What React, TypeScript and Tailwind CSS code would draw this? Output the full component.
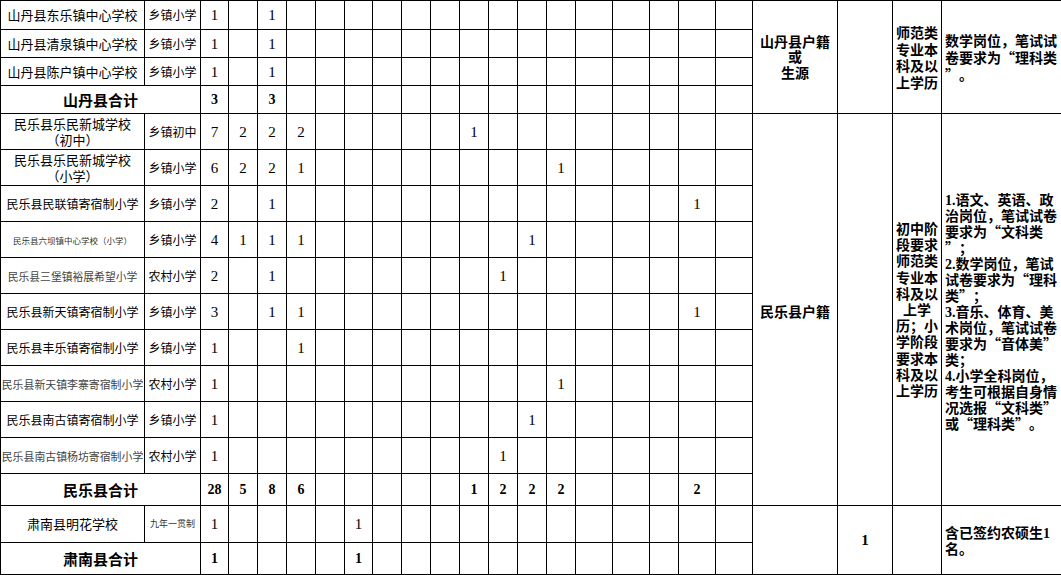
import React from "react";

const CJK = "font-['Noto_Sans_CJK_SC',sans-serif]";
const SERIF = "font-['Liberation_Serif','Noto_Sans_CJK_SC',serif]";
const TD = "border border-black p-0 text-center align-middle";

type Row = {
  h: string;
  name?: React.ReactNode;
  nameCls?: string;
  type?: string;
  typeCls?: string;
  total?: string;
  vals: Record<number, number>;
};

const rows: Row[] = [
  { h: "h-[29px]", name: "山丹县东乐镇中心学校", nameCls: "text-[13px]", type: "乡镇小学", vals: { 2: 1, 4: 1 } },
  { h: "h-[28px]", name: "山丹县清泉镇中心学校", nameCls: "text-[13px]", type: "乡镇小学", vals: { 2: 1, 4: 1 } },
  { h: "h-[28px]", name: "山丹县陈户镇中心学校", nameCls: "text-[13px]", type: "乡镇小学", vals: { 2: 1, 4: 1 } },
  { h: "h-[28px]", total: "山丹县合计", vals: { 2: 3, 4: 3 } },
  {
    h: "h-[36px]",
    name: (
      <>
        民乐县乐民新城学校
        <br />
        （初中）
      </>
    ),
    nameCls: "text-[13px] leading-[15px]",
    type: "乡镇初中",
    vals: { 2: 7, 3: 2, 4: 2, 5: 2, 11: 1 },
  },
  {
    h: "h-[36px]",
    name: (
      <>
        民乐县乐民新城学校
        <br />
        （小学）
      </>
    ),
    nameCls: "text-[13px] leading-[15px]",
    type: "乡镇小学",
    vals: { 2: 6, 3: 2, 4: 2, 5: 1, 14: 1 },
  },
  { h: "h-[36px]", name: "民乐县民联镇寄宿制小学", nameCls: "text-[12px]", type: "乡镇小学", vals: { 2: 2, 4: 1, 18: 1 } },
  { h: "h-[36px]", name: "民乐县六坝镇中心学校（小学）", nameCls: "text-[8.5px] text-[#333]", type: "乡镇小学", vals: { 2: 4, 3: 1, 4: 1, 5: 1, 13: 1 } },
  { h: "h-[36px]", name: "民乐县三堡镇裕展希望小学", nameCls: "text-[10.8px] text-[#444]", type: "农村小学", vals: { 2: 2, 4: 1, 12: 1 } },
  { h: "h-[36px]", name: "民乐县新天镇寄宿制小学", nameCls: "text-[12px]", type: "乡镇小学", vals: { 2: 3, 4: 1, 5: 1, 18: 1 } },
  { h: "h-[36px]", name: "民乐县丰乐镇寄宿制小学", nameCls: "text-[12px]", type: "乡镇小学", vals: { 2: 1, 5: 1 } },
  { h: "h-[36px]", name: "民乐县新天镇李寨寄宿制小学", nameCls: "text-[10.9px] text-[#444]", type: "农村小学", vals: { 2: 1, 14: 1 } },
  { h: "h-[36px]", name: "民乐县南古镇寄宿制小学", nameCls: "text-[12px]", type: "乡镇小学", vals: { 2: 1, 13: 1 } },
  { h: "h-[36px]", name: "民乐县南古镇杨坊寄宿制小学", nameCls: "text-[10.9px] text-[#444]", type: "农村小学", vals: { 2: 1, 12: 1 } },
  { h: "h-[32px]", total: "民乐县合计", vals: { 2: 28, 3: 5, 4: 8, 5: 6, 11: 1, 12: 2, 13: 2, 14: 2, 18: 2 } },
  { h: "h-[37px]", name: "肃南县明花学校", nameCls: "text-[13px]", type: "九年一贯制", typeCls: "text-[9px] text-[#333]", vals: { 2: 1, 7: 1 } },
  { h: "h-[32px]", total: "肃南县合计", vals: { 2: 1, 7: 1 } },
];

const NUM_W = [
  "w-[28px]", "w-[29px]", "w-[29px]", "w-[29px]", "w-[29px]", "w-[28px]", "w-[29px]",
  "w-[29px]", "w-[29px]", "w-[29px]", "w-[29px]", "w-[29px]", "w-[29px]",
  "w-[37px]", "w-[37px]", "w-[29px]", "w-[37px]", "w-[37px]",
];

// Renders a string with full-width quotation marks and serif digits.
function fmt(s: string): React.ReactNode[] {
  const out: React.ReactNode[] = [];
  const re = /([“”]|[0-9]+\.?)/g;
  let last = 0;
  let m: RegExpExecArray | null;
  let k = 0;
  while ((m = re.exec(s))) {
    if (m.index > last) out.push(s.slice(last, m.index));
    const t = m[0];
    if (t === "“") {
      out.push(
        <span key={k++} className="inline-block w-[14px] text-right">
          “
        </span>
      );
    } else if (t === "”") {
      out.push(
        <span key={k++} className="inline-block w-[14px] text-left">
          ”
        </span>
      );
    } else {
      out.push(
        <span key={k++} className={`${SERIF} font-bold`}>
          {t}
        </span>
      );
    }
    last = m.index + t.length;
  }
  if (last < s.length) out.push(s.slice(last));
  return out;
}

const Lines = ({ lines, h }: { lines: string[]; h: string }) => (
  <>
    {lines.map((l, i) => (
      <div key={i} className={`whitespace-nowrap overflow-visible ${h}`}>
        {fmt(l)}
      </div>
    ))}
  </>
);

function rightCells(idx: number) {
  const bold = `${CJK} font-bold text-[14px]`;
  if (idx === 0) {
    return (
      <>
        <td rowSpan={4} className={`${TD} ${bold} leading-[15.5px]`}>
          <Lines h="h-[15.5px]" lines={["山丹县户籍", "或", "生源"]} />
        </td>
        <td rowSpan={4} className={TD}></td>
        <td rowSpan={4} className={`${TD} ${bold} leading-[16.5px]`}>
          <Lines h="h-[16.5px]" lines={["师范类", "专业本", "科及以", "上学历"]} />
        </td>
        <td rowSpan={4} className={`${TD} ${bold} leading-[17px] text-left pl-[3px]`}>
          <Lines h="h-[17px]" lines={["数学岗位，笔试试", "卷要求为“理科类", "”。"]} />
        </td>
      </>
    );
  }
  if (idx === 4) {
    return (
      <>
        <td rowSpan={11} className={`${TD} ${bold} leading-[16px] !align-top pt-[189px]`}>
          民乐县户籍
        </td>
        <td rowSpan={11} className={TD}></td>
        <td rowSpan={11} className={`${TD} ${bold} leading-[16px] !align-top pt-[106px]`}>
          <Lines
            h="h-[16.2px]"
            lines={[
              "初中阶",
              "段要求",
              "师范类",
              "专业本",
              "科及以",
              "上学",
              "历；小",
              "学阶段",
              "要求本",
              "科及以",
              "上学历",
            ]}
          />
        </td>
        <td rowSpan={11} className={`${TD} ${bold} leading-[16px] text-left pl-[3px] !align-top pt-[77px]`}>
          <Lines
            h="h-[16px]"
            lines={[
              "1.语文、英语、政",
              "治岗位，笔试试卷",
              "要求为“文科类",
              "”；",
              "2.数学岗位，笔试",
              "试卷要求为“理科",
              "类”；",
              "3.音乐、体育、美",
              "术岗位，笔试试卷",
              "要求为“音体美”",
              "类；",
              "4.小学全科岗位，",
              "考生可根据自身情",
              "况选报“文科类”",
              "或“理科类”。",
            ]}
          />
        </td>
      </>
    );
  }
  if (idx === 15) {
    return (
      <>
        <td rowSpan={2} className={TD}></td>
        <td rowSpan={2} className={`${TD} ${SERIF} font-bold text-[15px]`}>
          1
        </td>
        <td rowSpan={2} className={TD}></td>
        <td rowSpan={2} className={`${TD} ${bold} leading-[16px] text-left pl-[3px]`}>
          <Lines h="h-[16px]" lines={["含已签约农硕生1", "名。"]} />
        </td>
      </>
    );
  }
  return null;
}

export default function App() {
  return (
    <div className="w-[1061px] h-[575px] overflow-hidden bg-white text-black">
      <table className="table-fixed border-collapse w-[1061px]">
        <colgroup>
          <col className="w-[144px]" />
          <col className="w-[56px]" />
          {NUM_W.map((w, i) => (
            <col key={i} className={w} />
          ))}
          <col className="w-[85px]" />
          <col className="w-[55px]" />
          <col className="w-[49px]" />
          <col className="w-[120px]" />
        </colgroup>
        <tbody>
          {rows.map((r, idx) => (
            <tr key={idx} className={r.h}>
              {r.total ? (
                <td colSpan={2} className={`${TD} ${CJK} font-bold text-[15px] leading-[18px]`}>
                  {r.total}
                </td>
              ) : (
                <>
                  <td className={`${TD} ${CJK} whitespace-nowrap leading-[16px] ${r.nameCls ?? ""}`}>{r.name}</td>
                  <td className={`${TD} ${CJK} whitespace-nowrap leading-[16px] ${r.typeCls ?? "text-[12px]"}`}>{r.type}</td>
                </>
              )}
              {NUM_W.map((_, i) => {
                const c = i + 2;
                const v = r.vals[c];
                return (
                  <td
                    key={c}
                    className={`${TD} ${SERIF} leading-[16px] ${r.total ? "font-bold text-[14px]" : "text-[15px]"}`}
                  >
                    {v ?? ""}
                  </td>
                );
              })}
              {rightCells(idx)}
            </tr>
          ))}
        </tbody>
      </table>
    </div>
  );
}
